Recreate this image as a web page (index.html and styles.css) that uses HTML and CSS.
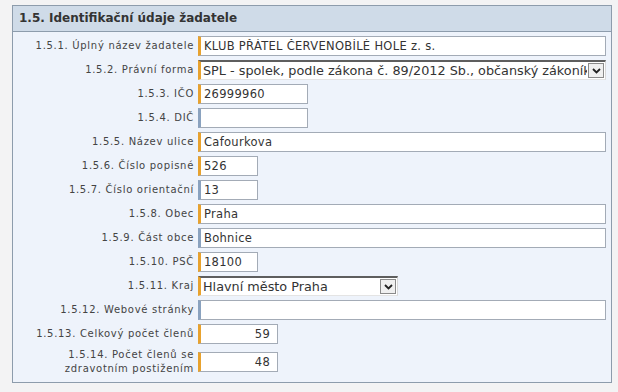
FILE: index.html
```html
<!DOCTYPE html>
<html lang="cs">
<head>
<meta charset="utf-8">
<link rel="stylesheet" href="styles.css">
</head>
<body>
<div class="panel">
  <div class="panel-head">1.5. Identifikační údaje žadatele</div>
  <div class="form">
    <label class="lbl">1.5.1. Úplný název žadatele</label>
    <div class="fld"><input class="inp req w-full" value="KLUB PŘÁTEL ČERVENOBÍLÉ HOLE z. s." readonly></div>

    <label class="lbl">1.5.2. Právní forma</label>
    <div class="fld"><div class="sel req w-full"><span class="sel-text">SPL - spolek, podle zákona č. 89/2012 Sb., občanský zákoník</span><span class="sel-btn"><svg width="9" height="6" viewBox="0 0 9 6"><path d="M1 1 L4.5 4.5 L8 1" fill="none" stroke="#222" stroke-width="1.8"/></svg></span></div></div>

    <label class="lbl">1.5.3. IČO</label>
    <div class="fld"><input class="inp req w-110" value="26999960" readonly></div>

    <label class="lbl">1.5.4. DIČ</label>
    <div class="fld"><input class="inp opt w-110" value="" readonly></div>

    <label class="lbl">1.5.5. Název ulice</label>
    <div class="fld"><input class="inp req w-full" value="Cafourkova" readonly></div>

    <label class="lbl">1.5.6. Číslo popisné</label>
    <div class="fld"><input class="inp req w-60" value="526" readonly></div>

    <label class="lbl">1.5.7. Číslo orientační</label>
    <div class="fld"><input class="inp opt w-60" value="13" readonly></div>

    <label class="lbl">1.5.8. Obec</label>
    <div class="fld"><input class="inp req w-full" value="Praha" readonly></div>

    <label class="lbl">1.5.9. Část obce</label>
    <div class="fld"><input class="inp opt w-full" value="Bohnice" readonly></div>

    <label class="lbl">1.5.10. PSČ</label>
    <div class="fld"><input class="inp req w-60" value="18100" readonly></div>

    <label class="lbl">1.5.11. Kraj</label>
    <div class="fld"><div class="sel req w-200"><span class="sel-text">Hlavní město Praha</span><span class="sel-btn"><svg width="9" height="6" viewBox="0 0 9 6"><path d="M1 1 L4.5 4.5 L8 1" fill="none" stroke="#222" stroke-width="1.8"/></svg></span></div></div>

    <label class="lbl">1.5.12. Webové stránky</label>
    <div class="fld"><input class="inp opt w-full" value="" readonly></div>

    <label class="lbl">1.5.13. Celkový počet členů</label>
    <div class="fld"><input class="inp req w-80 num" value="59" readonly></div>

    <label class="lbl two">1.5.14. Počet členů se<br>zdravotním postižením</label>
    <div class="fld"><input class="inp req w-80 num" value="48" readonly></div>
  </div>
</div>
</body>
</html>
```

FILE: styles.css
```css
html, body {
  margin: 0;
  background: #f3f3f4;
}
body {
  padding: 5px 6px 0 12px;
  font-family: "DejaVu Sans", Verdana, sans-serif;
}
.panel {
  width: 600px;
  box-sizing: border-box;
  border: 1px solid #8d9cac;
  background: #eef3fb;
}
.panel-head {
  background: #cfdbe8;
  border-bottom: 1px solid #8d9cac;
  height: 25px;
  line-height: 25px;
  padding-left: 6px;
  font-weight: bold;
  font-size: 12px;
  color: #333;
}
.form {
  display: grid;
  grid-template-columns: 181px 1fr;
  column-gap: 4px;
  row-gap: 4px;
  padding: 4px 4px 6px 0;
  align-items: center;
}
.lbl {
  text-align: right;
  font-size: 10px;
  letter-spacing: 0.7px;
  color: #444;
  line-height: 14px;
}
.fld {
  display: flex;
  align-items: center;
}
.inp {
  box-sizing: border-box;
  height: 20px;
  margin: 0;
  padding: 0 0 0 3px;
  border: 1px solid #a3abb6;
  border-left: 3px solid #e8a22e;
  background: #fff;
  font-family: "DejaVu Sans", Verdana, sans-serif;
  font-size: 11.5px;
  letter-spacing: 0.3px;
  color: #333;
  outline: none;
}
.inp.opt { border-left-color: #8aa2bf; }
.inp.num { text-align: right; padding-right: 7px; }
.w-full { width: 408px; }
.w-110 { width: 110px; }
.w-60 { width: 60px; }
.w-80 { width: 80px; }
.w-200 { width: 200px; }
.sel {
  box-sizing: border-box;
  height: 20px;
  display: flex;
  align-items: center;
  border-top: 2px solid #5e5e5e;
  border-right: 1px solid #d8d8d8;
  border-bottom: 1px solid #e4e4e4;
  border-left: 3px solid #e8a22e;
  background: #fff;
  overflow: hidden;
}
.sel-text {
  flex: 1;
  min-width: 0;
  white-space: nowrap;
  overflow: hidden;
  padding-left: 2px;
  font-size: 12.8px;
  color: #333;
  line-height: 17px;
}
.sel-btn {
  flex: none;
  width: 16px;
  height: 15px;
  margin: 0 1px 0 1px;
  box-sizing: border-box;
  border: 1px solid #8a8a8a;
  background: #f0f0f0;
  display: flex;
  align-items: center;
  justify-content: center;
}
```
